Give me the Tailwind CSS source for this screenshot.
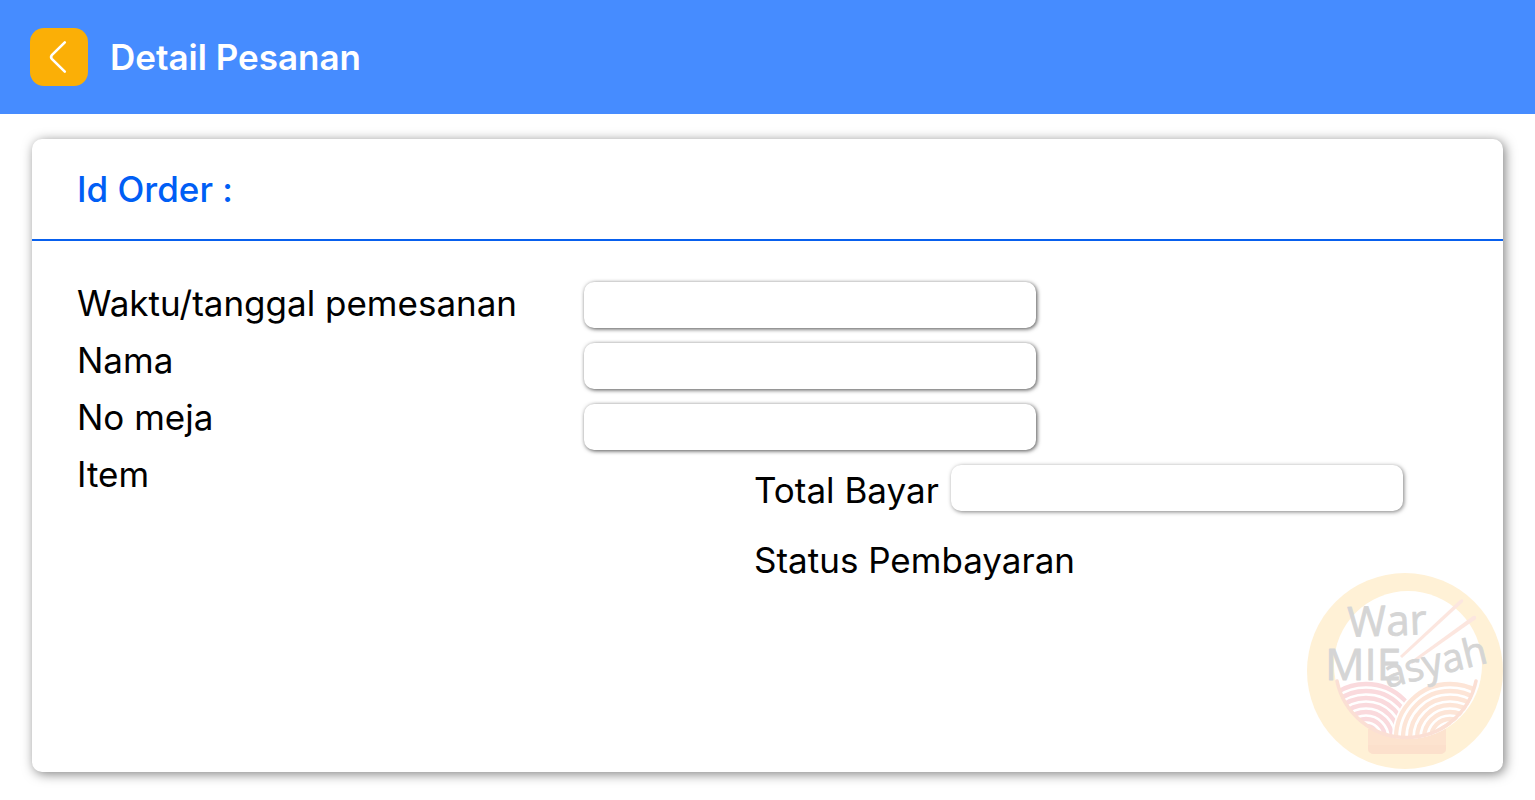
<!DOCTYPE html>
<html lang="id">
<head>
<meta charset="utf-8">
<meta name="viewport" content="width=device-width, initial-scale=1">
<title>Detail Pesanan</title>
<script src="https://cdn.jsdelivr.net/npm/@tailwindcss/browser@4"></script>
</head>
<body class="flex min-h-screen flex-col bg-white font-['Inter',sans-serif] text-[35px] leading-[42px] text-black">
<header class="flex items-center gap-[22px] bg-[#468cff] px-[30px] py-7">
  <button type="button" aria-label="Kembali" class="flex size-[58px] items-center justify-center rounded-[14px] bg-[#fbaf06]">
    <svg class="size-[58px]" viewBox="0 0 58 58" fill="none" stroke="#fff" stroke-width="2.6" stroke-linecap="round" stroke-linejoin="round"><path d="M34.8 14.3 21.8 27.2Q20.4 29 21.8 30.8L34.8 43.7"/></svg>
  </button>
  <h1 class="font-semibold text-white">Detail Pesanan</h1>
</header>
<main class="flex flex-1 flex-col px-8 pt-[25px] pb-7">
  <section class="relative flex-1 rounded-[10px] bg-white shadow-[2px_2px_12px_rgba(0,0,0,0.5)]">
    <h2 class="border-b-2 border-[#0860ee] px-[45px] py-[29px] font-medium text-[#005ef5]">Id Order :</h2>
    <form class="grid grid-cols-[507px_1fr] px-[45px] pt-[41px]">
      <div class="flex flex-col gap-[15px]">
        <label for="waktu">Waktu/tanggal pemesanan</label>
        <label for="nama">Nama</label>
        <label for="meja">No meja</label>
        <p>Item</p>
      </div>
      <div class="flex flex-col gap-[15px]">
        <input id="waktu" type="text" class="h-[46px] w-[452px] rounded-[10px] bg-white px-3 text-2xl shadow-[1px_1px_4px_rgba(0,0,0,0.7)]">
        <input id="nama" type="text" class="h-[46px] w-[452px] rounded-[10px] bg-white px-3 text-2xl shadow-[1px_1px_4px_rgba(0,0,0,0.7)]">
        <input id="meja" type="text" class="h-[46px] w-[452px] rounded-[10px] bg-white px-3 text-2xl shadow-[1px_1px_4px_rgba(0,0,0,0.7)]">
        <div class="flex flex-col gap-7 pl-[170px]">
          <div class="flex items-end gap-3">
            <label for="total" class="whitespace-nowrap">Total Bayar</label>
            <input id="total" type="text" class="h-[46px] w-[452px] rounded-[10px] bg-white px-3 text-2xl shadow-[1px_1px_4px_rgba(0,0,0,0.5)]">
          </div>
          <p>Status Pembayaran</p>
        </div>
      </div>
    </form>
    <svg class="absolute right-0 bottom-[3px] size-[196px]" viewBox="0 0 196 196" role="img" aria-label="War MIEasyah">
      <defs>
        <clipPath id="bowl"><path d="M30 100H170A70 66 0 0 1 30 100Z"/></clipPath>
      </defs>
      <circle cx="98" cy="98" r="98" fill="#fff1d6"/>
      <path d="M61 156H139V175Q139 181 132 181H68Q61 181 61 175Z" fill="#fde3cf"/>
      <path d="M61 172H139V175Q139 181 132 181H68Q61 181 61 175Z" fill="#fce0cc"/>
      <circle cx="101" cy="92" r="74" fill="#fff"/>
      <path d="M93 83 153 27Q157 25 156 29L95 85Z" fill="#fce6df"/>
      <path d="M103 89 166 43Q170 42 169 46L105 91Z" fill="#fce6df"/>
      <g clip-path="url(#bowl)" fill="none" stroke-width="4.3">
        <g stroke="#fadadd"><circle cx="59" cy="165" r="54"/><circle cx="59" cy="165" r="47"/><circle cx="59" cy="165" r="40"/><circle cx="59" cy="165" r="33"/><circle cx="59" cy="165" r="26"/><circle cx="59" cy="165" r="19"/><circle cx="59" cy="165" r="12"/></g>
        <circle cx="143" cy="165" r="58" fill="#fff"/>
        <g stroke="#fde5d7"><circle cx="143" cy="165" r="54"/><circle cx="143" cy="165" r="47"/><circle cx="143" cy="165" r="40"/><circle cx="143" cy="165" r="33"/><circle cx="143" cy="165" r="26"/><circle cx="143" cy="165" r="19"/><circle cx="143" cy="165" r="12"/></g>
      </g>
      <path d="M30 108A71 71 0 0 0 169 108" fill="none" stroke="#fbdfd4" stroke-width="3.6" stroke-linecap="round"/>
      <g fill="#d5d5d5" stroke="#d5d5d5" stroke-width="0.8" stroke-linejoin="round" font-family="'Open Sans',sans-serif">
        <text x="41" y="64" font-size="42" transform="rotate(-2 41 64)">War</text>
        <text x="18" y="107" font-size="44">MIE</text>
        <text x="80" y="115" font-size="39" transform="rotate(-14 80 115)">asyah</text>
      </g>
    </svg>
  </section>
</main>
</body>
</html>
